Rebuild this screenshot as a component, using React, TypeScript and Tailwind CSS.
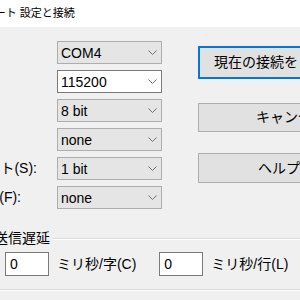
import { ReactNode } from "react"

const jp = "font-['Liberation_Sans','Noto_Sans_CJK_JP',sans-serif]"

function Chevron() {
    return (
        <svg width="9" height="5" viewBox="0 0 9 5" className="shrink-0">
            <path d="M0.5 0.5 L4.5 4.5 L8.5 0.5" fill="none" stroke="#707070" strokeWidth="1" />
        </svg>
    )
}

function Combo({ value, editable = false }: { value: string; editable?: boolean }) {
    return (
        <div
            className={
                editable
                    ? "flex h-[23px] w-[105px] items-center justify-between border border-[#7a7a7a] bg-white pl-[3px] pr-[4px]"
                    : "flex h-[23px] w-[105px] items-center justify-between border border-[#adadad] bg-[#e5e5e5] pl-[3px] pr-[4px]"
            }
        >
            <span className="text-[14px] leading-none text-black">{value}</span>
            <Chevron />
        </div>
    )
}

function Row({ label, labelPad = "", children }: { label?: string; labelPad?: string; children: ReactNode }) {
    return (
        <div className="flex items-center">
            <div className={`flex w-[37px] justify-end overflow-hidden whitespace-nowrap text-[14px] text-black ${labelPad}`}>
                {label}
            </div>
            <div className="ml-[20px]">{children}</div>
        </div>
    )
}

function Button({ text, focused = false, className = "" }: { text: string; focused?: boolean; className?: string }) {
    return (
        <div
            className={
                (focused
                    ? "border-2 border-[#0078d7] "
                    : "border border-[#adadad] ") +
                "flex w-[200px] items-center whitespace-nowrap bg-[#e1e1e1] text-[14px] text-black " +
                className
            }
        >
            {text}
        </div>
    )
}

export default function App() {
    return (
        <div className={`h-[300px] w-[300px] overflow-hidden bg-[#f0f0f0] ${jp}`}>
            <div className="flex h-[27px] items-center overflow-hidden whitespace-nowrap bg-white">
                <span className="-ml-[115px] text-[11px] text-black">Tera Term: シリアルポート 設定と接続</span>
            </div>

            <div className="flex pt-[14px]">
                {/* combo column */}
                <div className="flex flex-col gap-[6px]">
                    <Row><Combo value="COM4" /></Row>
                    <Row><Combo value="115200" editable /></Row>
                    <Row><Combo value="8 bit" /></Row>
                    <Row><Combo value="none" /></Row>
                    <Row label="ストップビット(S):"><Combo value="1 bit" /></Row>
                    <Row label="フロー制御(F):" labelPad="pr-[16px]"><Combo value="none" /></Row>
                </div>

                {/* buttons */}
                <div className="ml-[36px] flex flex-col pt-[5px]">
                    <Button text="現在の接続をリセット(N)" focused className="h-[33px] pl-[14px]" />
                    <Button text="キャンセル" className="mt-[24px] h-[29px] pl-[57px]" />
                    <Button text="ヘルプ(H)" className="mt-[21px] h-[30px] pl-[59px]" />
                </div>
            </div>

            {/* group box */}
            <div className="mt-[22px] flex items-center">
                <span className="-ml-[6px] whitespace-nowrap text-[14px] leading-none text-black">送信遅延</span>
                <div className="ml-[2px] mt-[1px] h-[2px] flex-1 border-t border-b border-t-[#dcdcdc] border-b-white" />
            </div>
            <div className="flex items-center pt-[7px] text-[14px] text-black">
                <div className="ml-[5px] flex h-[24px] w-[44px] items-center border border-[#7a7a7a] bg-white pl-[4px]">0</div>
                <span className="ml-[8px] whitespace-nowrap">ミリ秒/字(C)</span>
                <div className="ml-[23px] flex h-[24px] w-[44px] items-center border border-[#7a7a7a] bg-white pl-[4px]">0</div>
                <span className="ml-[8px] whitespace-nowrap">ミリ秒/行(L)</span>
            </div>
            <div className="mt-[13px] h-[2px] border-t border-b border-t-[#dcdcdc] border-b-white" />
        </div>
    )
}
